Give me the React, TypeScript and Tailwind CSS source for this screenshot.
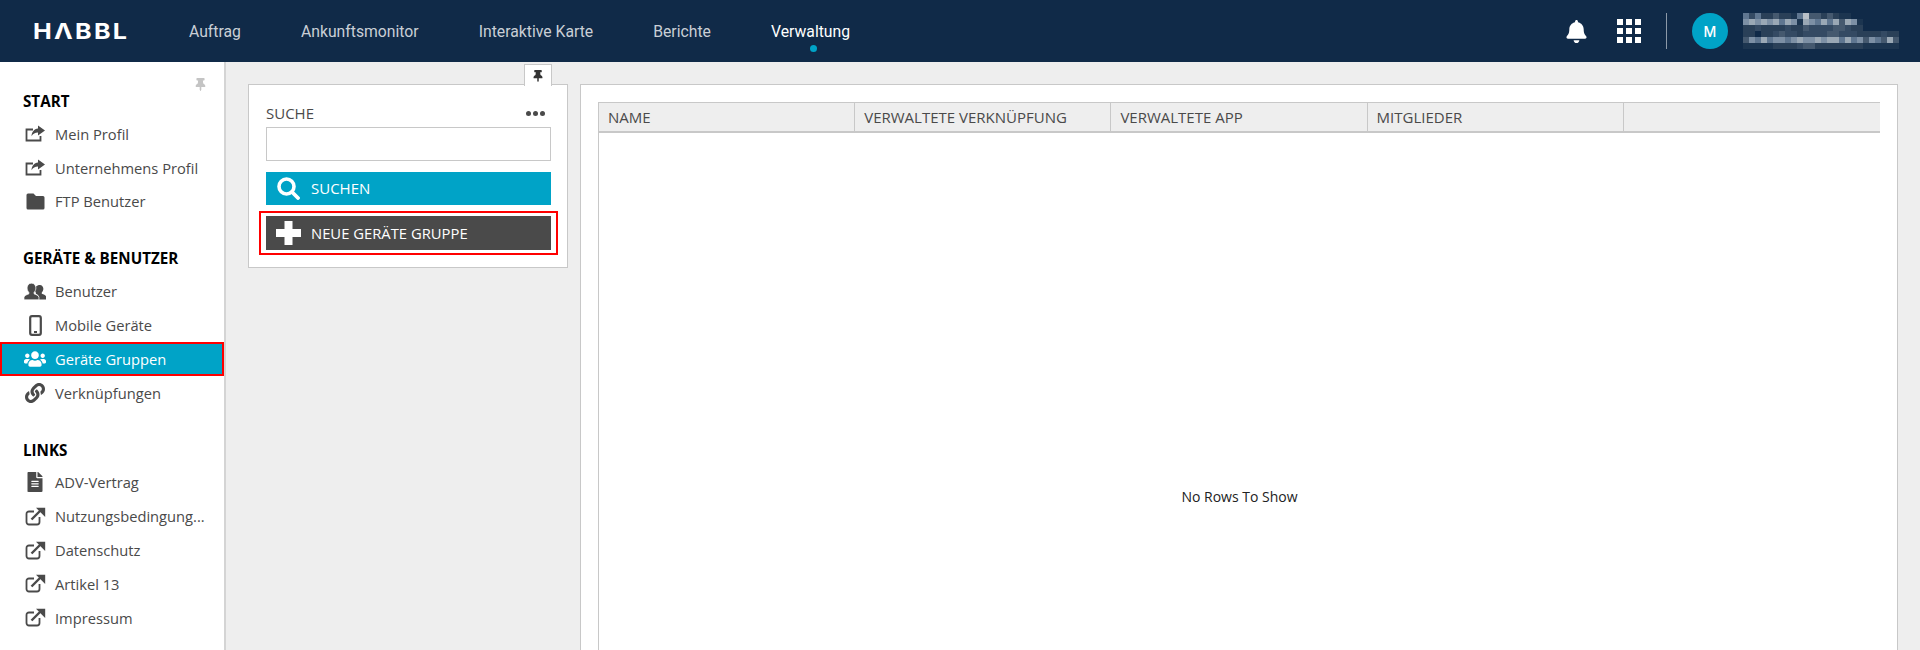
import { FaBell, FaLink, FaFileAlt, FaThumbtack, FaUsers } from "react-icons/fa";
import type { ReactNode } from "react";

const nav = ["Auftrag", "Ankunftsmonitor", "Interaktive Karte", "Berichte", "Verwaltung"];

function ExternalIcon() {
  return (
    <svg width="21" height="19" viewBox="0 0 21 19" fill="none" className="text-[#4a4a4a]">
      <path d="M14.5 10v5a2.5 2.5 0 0 1-2.5 2.5H4A2.5 2.5 0 0 1 1.5 15V7A2.5 2.5 0 0 1 4 4.5h5" stroke="currentColor" strokeWidth="1.8" />
      <path d="M6.5 12.5 16 3" stroke="currentColor" strokeWidth="2.4" />
      <path d="M11 .8h9.2V10z" fill="currentColor" />
    </svg>
  );
}

function ShareIcon() {
  return (
    <svg width="21" height="17" viewBox="0 0 21 17" fill="none" className="text-[#4a4a4a]">
      <path d="M8 4.5H1.5v11h14V11" stroke="currentColor" strokeWidth="1.8" />
      <path d="M13 .5l7 5-7 5V7.6c-3 0-5 1.2-6.5 3.6C6.8 7 9 4 13 3.6z" fill="currentColor" />
    </svg>
  );
}

function FolderIcon() {
  return (
    <svg width="19" height="17" viewBox="0 0 19 17" className="text-[#4a4a4a]">
      <path d="M2 .5h5.5L10 3h7a1.5 1.5 0 0 1 1.5 1.5V15a1.5 1.5 0 0 1-1.5 1.5H2A1.5 1.5 0 0 1 .5 15V2A1.5 1.5 0 0 1 2 .5z" fill="currentColor" />
    </svg>
  );
}

function PeopleIcon() {
  return (
    <svg width="25" height="19" viewBox="0 0 25 19" className="text-[#4a4a4a]">
      <path d="M18 2c2.5 0 4 2 4 4.500 0 1.700-.8 3.300-1.800 4.200v1.300c2 .6 4.300 1.600 4.800 3v3.500h-8v-3c0-1.500-2-2.800-3.500-3.500V10.800c-.9-1-1.500-2.600-1.500-4.300C12 4 15.500 2 18 2z" fill="currentColor" />
      <path d="M8.500 0c3 0 5 2.400 5 5.400 0 2-.9 3.900-2 5v1.800c2.500.8 5 2 5.500 3.600V19H0v-3.200c.5-1.600 3-2.800 5.500-3.600v-1.800c-1.100-1.100-2-3-2-5C3.500 2.400 5.500 0 8.500 0z" fill="currentColor" stroke="#fff" strokeWidth="0.8" />
    </svg>
  );
}

function MobileIcon() {
  return (
    <svg width="13" height="21" viewBox="0 0 13 21" fill="none" className="text-[#4a4a4a]">
      <rect x="1.2" y="1.2" width="10.600" height="18.600" rx="1.800" stroke="currentColor" strokeWidth="2.200" />
      <rect x="5" y="16" width="3" height="2" fill="currentColor" />
    </svg>
  );
}

function SearchIcon() {
  return (
    <svg width="23" height="23" viewBox="0 0 23 23" fill="none" className="text-white">
      <circle cx="9.500" cy="9.500" r="7.500" stroke="currentColor" strokeWidth="3.600" />
      <path d="M15 15l6 6" stroke="currentColor" strokeWidth="3.800" strokeLinecap="round" />
    </svg>
  );
}

function PlusIcon() {
  return (
    <svg width="25" height="24" viewBox="0 0 25 24" className="text-white">
      <path d="M8.500 0h8v8h8.500v8h-8.500v8h-8v-8H0V8h8.500z" fill="currentColor" />
    </svg>
  );
}

const sections: { title: string; items: { label: string; icon: ReactNode; active?: boolean }[] }[] = [
  {
    title: "START",
    items: [
      { label: "Mein Profil", icon: <ShareIcon /> },
      { label: "Unternehmens Profil", icon: <ShareIcon /> },
      { label: "FTP Benutzer", icon: <FolderIcon /> },
    ],
  },
  {
    title: "GERÄTE & BENUTZER",
    items: [
      { label: "Benutzer", icon: <PeopleIcon /> },
      { label: "Mobile Geräte", icon: <MobileIcon /> },
      { label: "Geräte Gruppen", icon: <FaUsers size={22} />, active: true },
      { label: "Verknüpfungen", icon: <FaLink size={20} /> },
    ],
  },
  {
    title: "LINKS",
    items: [
      { label: "ADV-Vertrag", icon: <FaFileAlt size={20} /> },
      { label: "Nutzungsbedingung...", icon: <ExternalIcon /> },
      { label: "Datenschutz", icon: <ExternalIcon /> },
      { label: "Artikel 13", icon: <ExternalIcon /> },
      { label: "Impressum", icon: <ExternalIcon /> },
    ],
  },
];

// pixelated user name, one digit per 6px cell (brightness)
const mosaic = [
  "53522422159442421100000000",
  "67676757617657574761000000",
  "22322223224333344322000000",
  "22022343323333443332222322",
  "46575665676676775756465474",
  "11111222234422222222111111",
];
const shades = ["#102a48", "#1c3550", "#2a4058", "#344a63", "#45596f", "#5f7690", "#7d90a5", "#9aa8b5", "#a3adb8", "#b8c0c8"];

function NameMosaic() {
  return (
    <svg width="156" height="36" viewBox="0 0 156 36" shapeRendering="crispEdges">
      {mosaic.map((row, y) =>
        row.split("").map((c, x) => <rect key={`${x}-${y}`} x={x * 6} y={y * 6} width="6" height="6" fill={shades[Number(c)]} />)
      )}
    </svg>
  );
}

function Header() {
  return (
    <header className="h-[62px] shrink-0 bg-[#102a48] flex items-center font-['Roboto',sans-serif]">
      <div className="w-[189px] pl-[33px] shrink-0 text-white font-['Inter',sans-serif] font-bold text-[22px] tracking-[2px] leading-none">
        <span className="inline-block origin-left scale-x-[1.14]">HΛBBL</span>
      </div>
      <nav className="flex gap-[60px] pt-[2px]">
        {nav.map((n) => (
          <span key={n} className={n === "Verwaltung" ? "relative text-white text-[15.75px]" : "text-[#c9cfd6] text-[15.75px]"}>
            {n}
            {n === "Verwaltung" && <span className="absolute left-[39px] top-[25px] w-[7px] h-[7px] rounded-full bg-[#00a3c7]" />}
          </span>
        ))}
      </nav>
      <div className="ml-auto flex items-center pr-[21px]">
        <FaBell size={23} className="text-white" />
        <div className="ml-[29px] grid grid-cols-3 gap-[3px]">
          {Array.from({ length: 9 }).map((_, i) => (
            <span key={i} className="w-[6px] h-[6px] bg-white" />
          ))}
        </div>
        <div className="ml-[25px] w-px h-[36px] bg-[#8c99a8]" />
        <div className="ml-[25px] w-[36px] h-[36px] rounded-full bg-[#00a3c7] text-white text-[14px] font-medium flex items-center justify-center font-['Inter',sans-serif]">M</div>
        <div className="ml-[15px]">
          <NameMosaic />
        </div>
      </div>
    </header>
  );
}

function Sidebar() {
  return (
    <aside className="relative w-[226px] shrink-0 bg-white border-r-2 border-[#d4d4d4] pt-[23px] text-[14.7px] text-[#4a4a4a]">
      <FaThumbtack size={13} className="absolute left-[194px] top-[16px] text-[#c4c4c4]" />
      {sections.map((s) => (
        <div key={s.title} className="mb-[24px]">
          <h3 className="pl-[23px] h-[32px] leading-[32px] text-[15.2px] font-bold text-black">{s.title}</h3>
          <ul>
            {s.items.map((it) => (
              <li
                key={it.label}
                className={
                  it.active
                    ? "h-[33.8px] flex items-center pl-[22px] gap-[9px] bg-[#00a3c7] text-white border-2 border-[#f00]"
                    : "h-[33.8px] flex items-center pl-[24px] gap-[9px] whitespace-nowrap"
                }
              >
                <span className="w-[22px] shrink-0 flex justify-center items-center">{it.icon}</span>
                {it.label}
              </li>
            ))}
          </ul>
        </div>
      ))}
    </aside>
  );
}

function SearchPanel() {
  return (
    <div className="relative w-[320px] h-[184px] shrink-0 bg-white border border-[#c8c8c8] px-[17px] pt-[19px]">
      <div className="absolute right-[15px] -top-[21px] w-[28px] h-[22px] bg-white border border-b-0 border-[#c8c8c8] flex items-center justify-center">
        <FaThumbtack size={12} className="text-[#333]" />
      </div>
      <div className="flex items-center justify-between h-[18px] text-[15px] text-[#4a4a4a]">
        <span>SUCHE</span>
        <span className="flex gap-[2px] pr-[5px]">
          <i className="w-[5px] h-[5px] rounded-full bg-[#4a4a4a]" />
          <i className="w-[5px] h-[5px] rounded-full bg-[#4a4a4a]" />
          <i className="w-[5px] h-[5px] rounded-full bg-[#4a4a4a]" />
        </span>
      </div>
      <input className="block mt-[5px] w-[285px] h-[34px] bg-white border border-[#c8c8c8]" />
      <button className="mt-[11px] w-[285px] h-[33px] bg-[#00a3c7] text-white text-[15px] flex items-center pl-[11px] gap-[11px]">
        <SearchIcon />
        SUCHEN
      </button>
      <div className="mt-[6px] -mx-[7px] w-[299px] border-2 border-[#f00] px-[5px] py-[3px]">
        <button className="w-[285px] h-[34px] bg-[#4a4a4a] text-white text-[14.8px] flex items-center pl-[10px] gap-[10px]">
          <PlusIcon />
          NEUE GERÄTE GRUPPE
        </button>
      </div>
    </div>
  );
}

function DataPanel() {
  const cols = ["NAME", "VERWALTETE VERKNÜPFUNG", "VERWALTETE APP", "MITGLIEDER", ""];
  return (
    <div className="w-[1318px] h-[780px] shrink-0 bg-white border border-[#c8c8c8] pt-[17px] px-[17px]">
      <div className="border-l border-[#c8c8c8]">
        <div className="grid grid-cols-5 h-[31px] bg-[#eeeeee] border-t border-b-2 border-[#c8c8c8] text-[15px] text-[#4a4a4a]">
          {cols.map((c, i) => (
            <div key={i} className="px-[9px] pt-px flex items-center border-r border-[#c8c8c8] last:border-r-0 whitespace-nowrap">
              {c}
            </div>
          ))}
        </div>
        <div className="h-[726px] flex items-center justify-center text-[14px] text-[#222]">No Rows To Show</div>
      </div>
    </div>
  );
}

export default function App() {
  return (
    <div className="h-[650px] flex flex-col overflow-hidden bg-[#eeeeee] font-['Open_Sans',sans-serif]">
      <Header />
      <div className="flex-1 flex min-h-0">
        <Sidebar />
        <main className="flex-1 flex items-start pl-[22px] pt-[22px] gap-[12px] overflow-hidden">
          <SearchPanel />
          <DataPanel />
        </main>
      </div>
    </div>
  );
}
